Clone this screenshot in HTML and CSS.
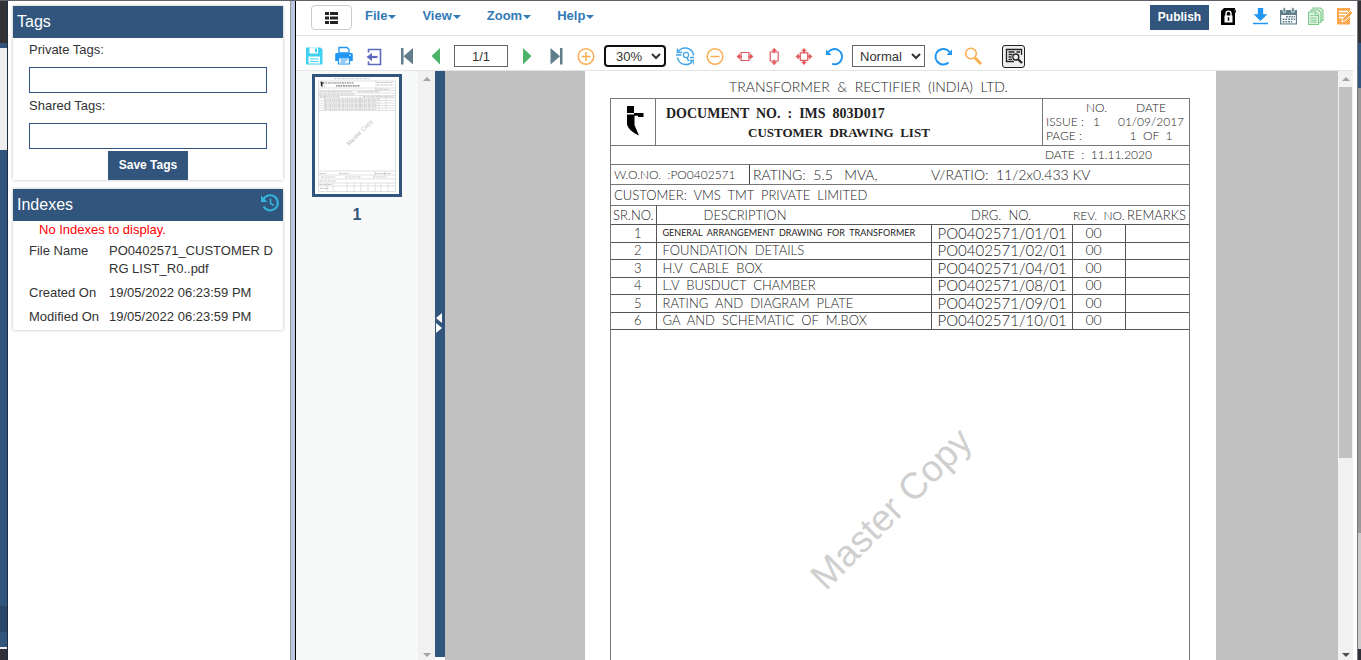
FILE: index.html
```html
<!DOCTYPE html>
<html lang="en">
<head>
<meta charset="utf-8">
<title>Document Viewer</title>
<link rel="stylesheet" href="styles.css">
</head>
<body>
<div class="backdrop backdrop-left"></div>

<aside class="sidebar">
  <section class="panel">
    <h2 class="panel-title">Tags</h2>
    <form class="tags-form">
      <label for="private-tags">Private Tags:</label>
      <input id="private-tags" class="tag-input" type="text">
      <label for="shared-tags">Shared Tags:</label>
      <input id="shared-tags" class="tag-input" type="text">
      <button class="btn-primary save" type="button">Save Tags</button>
    </form>
  </section>
  <section class="panel">
    <h2 class="panel-title">Indexes
      <button class="icon-btn history" type="button" aria-label="History"><svg viewBox="0 0 20 20" width="20" height="20" fill="none" stroke="#33b5dc" stroke-width="2"><path d="M3.5 6.2A7.6 7.6 0 1 1 3.6 13.6"/><path d="M1 2.5V9h6.5z" fill="#33b5dc" stroke="none"/><path d="M10.5 5.5v4.8l3.2 2.2" stroke-width="1.6"/></svg></button>
    </h2>
    <p class="empty">No Indexes to display.</p>
    <dl class="meta">
      <dt>File Name</dt><dd>PO0402571_CUSTOMER DRG LIST_R0..pdf</dd>
      <dt>Created On</dt><dd>19/05/2022 06:23:59 PM</dd>
      <dt>Modified On</dt><dd>19/05/2022 06:23:59 PM</dd>
    </dl>
  </section>
</aside>

<div class="divider"></div>

<main class="viewer">
  <header class="menubar">
    <button class="list-btn" type="button" aria-label="Toggle list"><svg viewBox="0 0 14 12" width="14" height="12" fill="#222"><path d="M0 0h4v3H0zM5 0h8v3H5zM0 4.5h4v3H0zM5 4.5h8v3H5zM0 9h4v3H0zM5 9h8v3H5z"/></svg></button>
    <nav class="menu">
      <a href="#file">File<i class="caret"></i></a>
      <a href="#view">View<i class="caret"></i></a>
      <a href="#zoom">Zoom<i class="caret"></i></a>
      <a href="#help">Help<i class="caret"></i></a>
    </nav>
    <button class="btn-primary publish" type="button">Publish</button>
    <div class="actions">
      <button class="icon-btn lock" type="button" aria-label="Lock"><svg viewBox="0 0 20 20" width="20" height="20"><path d="M2 4l3-3h11v17H2z" fill="#000"/><path d="M15 2l2 1v3l-2-1z" fill="#333"/><path d="M5.500 8.500h8v7h-8z" fill="#fff"/><path d="M7 9V6.600a2.500 2.500 0 0 1 5 0V9" fill="none" stroke="#fff" stroke-width="1.400"/><path d="M9.500 10.200v3.500" stroke="#000" stroke-width="1.500"/></svg></button>
      <button class="icon-btn" type="button" aria-label="Download"><svg viewBox="0 0 20 20" width="20" height="20" fill="#2196f3"><path d="M6.8 1h5.4v6.2h4.2L9.5 14 2.6 7.2h4.2zM2 15.700h15v1.600H2z"/></svg></button>
      <button class="icon-btn" type="button" aria-label="Calendar"><svg viewBox="0 0 20 20" width="20" height="20"><path d="M1 3h17v14.500H1z" fill="#607d8b"/><path d="M2.200 8h14.600v8.400H2.200z" fill="#fff"/><path d="M4 .8h2.600v4.400H4zM12.600.8h2.600v4.400h-2.600z" fill="#607d8b" stroke="#fff" stroke-width=".7"/><path d="M7 9.700h9M3.700 12.200h12.300M3.700 14.700h9.500" stroke="#607d8b" stroke-width="1.600" stroke-dasharray="1.800 .9"/></svg></button>
      <button class="icon-btn" type="button" aria-label="Copies"><svg viewBox="0 0 20 20" width="20" height="20" fill="#e0f3e3" stroke="#7cc98a" stroke-width="1.100"><path d="M6 1h7.500L16 3.500v10H6z"/><path d="M4 3h7.500L14 5.500v10H4z"/><path d="M1.600 5h7l2.900 3v9.500H1.600z"/><path d="M8 5v3.500h3.500M3.500 8.500h3M3.500 11h6M3.500 13.200h6M3.500 15.300h6"/></svg></button>
      <button class="icon-btn" type="button" aria-label="Edit"><svg viewBox="0 0 20 20" width="20" height="20"><path d="M2 1h13v16.500H2z" fill="#fba94c"/><path d="M4 4.500h9M4 7.500h7M4 10.500h4" stroke="#fff" stroke-width="1.300"/><path d="M7.500 11.500L15.500 3.500l2.500 2.500-8 8-3.300.8z" fill="#fba94c" stroke="#fff"/></svg></button>
    </div>
  </header>

  <div class="toolbar">
    <div class="tools files">
      <button class="icon-btn" type="button" aria-label="Save"><svg viewBox="0 0 20 20" width="20" height="20"><path d="M2 1.500h14.500l2 2V18.500H2z" fill="#3fd0f2"/><path d="M5.500 1.500h8.500v6H5.500zM4.500 10.500h11.500v7H4.500z" fill="#fff"/><path d="M11 2.500h2v3.800h-2zM6 12.500h8.500v1H6zM6 15h8.500v1H6z" fill="#3fd0f2"/></svg></button>
      <button class="icon-btn" type="button" aria-label="Print"><svg viewBox="0 0 20 20" width="20" height="20"><path d="M5 1.500h8l2 2V7H5z" fill="#fff" stroke="#2196f3" stroke-width="1.300"/><path d="M2.500 7h15a1.300 1.300 0 0 1 1.300 1.300V15H1.200V8.300A1.300 1.300 0 0 1 2.500 7z" fill="#2196f3"/><path d="M4.500 11.800h11V18h-11z" fill="#fff" stroke="#2196f3" stroke-width="1.200"/><path d="M6.500 14h7M6.500 16h5" stroke="#2196f3"/><circle cx="16" cy="9.200" r=".8" fill="#fff"/></svg></button>
      <button class="icon-btn" type="button" aria-label="Exit"><svg viewBox="0 0 20 20" width="20" height="20" fill="none" stroke="#5c6bc0" stroke-width="1.600"><path d="M4.500 6.500V3.500h12v15h-12V15.500"/><path d="M13.500 11H7" stroke-width="2.200"/><path d="M2.500 11l5.500-4v8z" fill="#5c6bc0" stroke="none"/></svg></button>
    </div>
    <div class="tools">
      <button class="icon-btn" type="button" aria-label="First page"><svg viewBox="0 0 20 20" width="20" height="20" fill="#607d8b"><path d="M5 2h2.500v16.500H5zM17 2v16.500L7.500 10.200z"/></svg></button>
      <button class="icon-btn" type="button" aria-label="Previous page"><svg viewBox="0 0 20 20" width="20" height="20"><path d="M14 2v16.500L5.500 10z" fill="#4db36a"/></svg></button>
    </div>
    <input class="page-box" type="text" value="1/1" aria-label="Page">
    <div class="tools">
      <button class="icon-btn" type="button" aria-label="Next page"><svg viewBox="0 0 20 20" width="20" height="20"><path d="M7 2v16.500L15.500 10z" fill="#4db36a"/></svg></button>
      <button class="icon-btn" type="button" aria-label="Last page"><svg viewBox="0 0 20 20" width="20" height="20" fill="#607d8b"><path d="M14 2h2.500v16.500H14zM4.500 2v16.500l9.500-8.300z"/></svg></button>
      <button class="icon-btn" type="button" aria-label="Zoom in"><svg viewBox="0 0 20 20" width="20" height="20" fill="none" stroke="#fbac50" stroke-width="1.500"><circle cx="10" cy="10.500" r="7.800"/><path d="M10 6v9M5.500 10.500h9"/></svg></button>
    </div>
    <select class="zoom-select" aria-label="Zoom level"><option>30%</option></select>
    <div class="tools">
      <button class="icon-btn" type="button" aria-label="Reset zoom"><svg viewBox="0 0 20 20" width="20" height="20" fill="none" stroke="#42a5e8" stroke-width="1.500"><path d="M4.500 5.500A8.300 8.300 0 0 1 19.500 9.500M18.500 15A8.300 8.300 0 0 1 3.500 11.500"/><path d="M3.500 2.500v4h4.500M20 18.500v-4h-4.500M2 9h5.500M16 11.500h4"/><circle cx="12" cy="9" r="2.600" stroke-width="1.200"/><path d="M13 11.500l1.500 3.500"/></svg></button>
      <button class="icon-btn" type="button" aria-label="Zoom out"><svg viewBox="0 0 20 20" width="20" height="20" fill="none" stroke="#fbac50" stroke-width="1.500"><circle cx="11" cy="10.500" r="7.800"/><path d="M6.500 10.500h9"/></svg></button>
      <button class="icon-btn" type="button" aria-label="Fit width"><svg viewBox="0 0 20 20" width="20" height="20" fill="#e05c62"><path d="M7 6.500h8v8H7z" fill="#fff" stroke="#e05c62" stroke-width="1.200"/><path d="M2.500 10.500l3.500-3v2.200h2v1.600H6v2.200zM19.500 10.500l-3.500-3v2.200h-2v1.600h2v2.200z"/></svg></button>
      <button class="icon-btn" type="button" aria-label="Fit height"><svg viewBox="0 0 20 20" width="20" height="20" fill="#e05c62"><path d="M6.200 6h8v9h-8z" fill="#fff" stroke="#e05c62" stroke-width="1.200"/><path d="M10.200 1.800l3 3.400H11v2H9.400v-2H7.200zM10.200 19.200l3-3.400H11v-2H9.400v2H7.200z"/></svg></button>
      <button class="icon-btn" type="button" aria-label="Fit page"><svg viewBox="0 0 20 20" width="20" height="20" fill="#e05c62"><path d="M6.300 6.800h7.500v7.500H6.300z" fill="#fff" stroke="#e05c62" stroke-width="1.200"/><path d="M10 2l3 3.200h-2v1.800H9V5.200H7zM10 19l3-3.200h-2V14H9v1.800H7zM1.500 10.500l3.500-3v2h2v2H5v2zM18.500 10.500l-3.500-3v2h-2v2h2v2z"/></svg></button>
      <button class="icon-btn" type="button" aria-label="Rotate left"><svg viewBox="0 0 20 20" width="20" height="20" fill="none" stroke="#2196f3" stroke-width="2"><path d="M4.500 6A7.600 7.600 0 1 1 8 17.900"/><path d="M2 3.500v5.500h5.500z" fill="#2196f3" stroke="none"/></svg></button>
    </div>
    <select class="mode-select" aria-label="View mode"><option>Normal</option></select>
    <div class="tools">
      <button class="icon-btn" type="button" aria-label="Rotate right"><svg viewBox="0 0 20 20" width="20" height="20" fill="none" stroke="#2196f3" stroke-width="2"><path d="M16.500 6A7.800 7.800 0 1 0 15.500 16.500"/><path d="M19 3.500v5.500h-5.500z" fill="#2196f3" stroke="none"/></svg></button>
      <button class="icon-btn" type="button" aria-label="Search"><svg viewBox="0 0 20 20" width="20" height="20" fill="none" stroke="#fbac50"><circle cx="8" cy="7.500" r="5.300" stroke-width="1.500"/><path d="M12 12l6 6" stroke-width="3"/></svg></button>
    </div>
    <button class="find-btn" type="button" aria-label="Find in page"><svg viewBox="0 0 18 18" width="18" height="18" fill="none" stroke="#222" stroke-width="1.300"><path d="M9 14.500H1.500v-12h15V8"/><path d="M3.500 5h6M11.500 5h3.500M3.500 7.500h4M3.500 10h3M3.500 12.300h3.500" /><circle cx="10.800" cy="10" r="3"/><path d="M13 12.300l4 3.700" stroke-width="2.200"/></svg></button>
  </div>

  <div class="workspace">
    <div class="thumbs">
      <button class="thumb" type="button" aria-label="Page 1">
        <svg viewBox="0 0 84 117" width="84" height="117">
          <path fill="#fff" d="M0 0h84v117H0z"/>
          <g stroke="#ccc" stroke-width=".6" fill="none">
            <path d="M3.500 4h77v110.500H3.500zM9.500 4v7M3.500 11h77M3.500 13.500h77M3.500 16h77M3.500 18.500h77M3.500 21h77M3.500 23.500h77M3.500 26h77M3.500 28.500h77M3.500 31h77M3.500 33.500h77M9.500 18.500v15M45 18.500v15M64 18.500v15M71 18.500v15M61 4v7"/>
            <path d="M3.500 94h77M3.500 98h77M3.500 102h77M3.500 106h77M3.500 109h77M12 106v8M18 106v8M32 106v8M39 106v8M46 106v8M53 106v8M60 106v8M66 106v8M73 106v8M60 94v5M70 94v5"/>
          </g>
          <g stroke="#999" stroke-width="1.100" fill="none" stroke-dasharray="2 .6 1 .7" opacity=".6">
            <path d="M19 1.800h36M62 5.500h16M62 8h17M60 12.200h14M4.500 14.800h33M43 14.800h22M4.500 17.300h35M5 19.800h20M48 19.800h31M10 22.300h54M10 24.800h52M10 27.300h52M10 29.800h52M10 32.300h52M4.500 96.500h6M24 96.500h10M60 96.500h16M6 100h14M30 100h16M58 100h14M4.500 104h17M4.500 107.500h12M5 111.500h9"/>
          </g>
          <path d="M10.500 6h28M21 8.800h24" stroke="#777" stroke-width="1.200" stroke-dasharray="1.500 .7 2 .6"/>
          <path d="M5.500 4.800h2v.8h1.500v1H7.500V10l-1.500-1z" fill="#222"/>
          <text class="thumb-mark" transform="translate(34 69) rotate(-45)">Master Copy</text>
        </svg>
      </button>
      <span class="thumb-number">1</span>
    </div>
    <div class="scroll thumb-scroll"><i class="up"></i><i class="down"></i></div>
    <div class="splitter"><i class="go-left"></i><i class="go-right"></i></div>

    <div class="canvas">
      <article class="sheet">
        <h1 class="company">TRANSFORMER  &amp;  RECTIFIER  (INDIA)  LTD.</h1>
        <div class="drawing">
          <div class="doc-head">
            <div class="doc-logo"><svg viewBox="0 0 20 32" width="20" height="32"><path d="M2 1h7v7H2zM2 9.500h7V8h9.500v4H13v-1.200H9.500V20L14 30.500C7 27.500 2.500 23 2 19z"/></svg></div>
            <div class="doc-title"><span>DOCUMENT  NO.  :  IMS  803D017</span><span class="second">CUSTOMER  DRAWING  LIST</span></div>
            <div class="doc-issue">
              <span></span><span class="mid">NO.</span><span class="end">DATE</span>
              <span>ISSUE :</span><span>1</span><span class="end">01/09/2017</span>
              <span>PAGE :</span><span></span><span class="end">1  OF  1</span>
            </div>
          </div>
          <div class="doc-date">DATE  :  11.11.2020</div>
          <div class="doc-order"><span class="wo">W.O.NO.  :PO0402571</span><span class="rating">RATING:  5.5   MVA,</span><span>V/RATIO:  11/2x0.433 KV</span></div>
          <div class="doc-customer">CUSTOMER:  VMS  TMT  PRIVATE  LIMITED</div>
          <table class="drawings">
            <colgroup><col class="c-sr"><col class="c-desc"><col class="c-drg"><col class="c-rev"><col class="c-rem"></colgroup>
            <thead><tr><th>SR.NO.</th><th class="h-desc">DESCRIPTION</th><th class="h-drg">DRG.  NO.</th><th class="h-rev">REV.  NO.</th><th>REMARKS</th></tr></thead>
            <tbody>
              <tr><td>1</td><td class="tight">GENERAL  ARRANGEMENT  DRAWING  FOR  TRANSFORMER</td><td>PO0402571/01/01</td><td>00</td><td></td></tr>
              <tr><td>2</td><td>FOUNDATION  DETAILS</td><td>PO0402571/02/01</td><td>00</td><td></td></tr>
              <tr><td>3</td><td>H.V  CABLE  BOX</td><td>PO0402571/04/01</td><td>00</td><td></td></tr>
              <tr><td>4</td><td>L.V  BUSDUCT  CHAMBER</td><td>PO0402571/08/01</td><td>00</td><td></td></tr>
              <tr><td>5</td><td>RATING  AND  DIAGRAM  PLATE</td><td>PO0402571/09/01</td><td>00</td><td></td></tr>
              <tr><td>6</td><td>GA  AND  SCHEMATIC  OF  M.BOX</td><td>PO0402571/10/01</td><td>00</td><td></td></tr>
            </tbody>
          </table>
        </div>
        <div class="watermark">Master Copy</div>
      </article>
    </div>
    <div class="scroll page-scroll"><i class="up"></i><div class="handle"></div><i class="down dark"></i></div>
  </div>
</main>

<div class="backdrop backdrop-right"></div>
</body>
</html>
```

FILE: styles.css
```css
* { box-sizing: border-box; }
body {
  margin: 0;
  height: 100vh;
  overflow: hidden;
  display: flex;
  border-top: 1px solid #606066;
  background: #fff;
  color: #333;
  font: 13px/18px "Liberation Sans", Arial, sans-serif;
}
button, input, select { font: inherit; color: inherit; }
button { cursor: pointer; }
h1, h2, p, dl, dd { margin: 0; font-weight: normal; }

/* page behind the dialog */
.backdrop { flex: none; }
.backdrop-left {
  width: 8px;
  border-right: 1px solid #1f2d3f;
  background: linear-gradient(#333337 42px, #31557d 42px 47px, #eee 47px 149px, #31557d 149px 605px, #2a4669 605px 631px, #31557d 631px 646px, #eee 646px 648px, #303038 648px);
}
.backdrop-right {
  width: 4px;
  border-left: 1px solid #77777c;
  background: linear-gradient(#333337 42px, #31557d 42px 87px, #999 87px 532px, #ccc 532px 648px, #303038 648px);
}

/* sidebar */
.sidebar {
  flex: none;
  width: 282px;
  padding: 5px 7px 0 5px;
  display: flex;
  flex-direction: column;
  gap: 9px;
}
.panel { box-shadow: 0 0 3px rgba(0, 0, 0, .28); }
.panel-title {
  display: flex;
  justify-content: space-between;
  height: 32px;
  padding: 0 3px 0 4px;
  background: #31557d;
  color: #fff;
  font-size: 16px;
  line-height: 32px;
}
.tags-form {
  display: flex;
  flex-direction: column;
  padding: 2px 16px 0;
}
.tags-form label { line-height: 20px; }
.tag-input {
  height: 26px;
  margin: 7px 0 3px;
  padding: 2px 6px;
  border: 1px solid #31557d;
}
.tags-form .save { margin-top: -1px; }
.btn-primary {
  border: 0;
  background: #31557d;
  color: #fff;
  font-weight: bold;
  font-size: 12px;
}
.save {
  align-self: center;
  width: 80px;
  height: 29px;
  padding: 0 0 2px;
}
.icon-btn {
  flex: none;
  width: 20px;
  height: 20px;
  padding: 0;
  border: 0;
  background: none;
}
.icon-btn svg, .find-btn svg, .list-btn svg, .thumb svg { display: block; }
.history { margin-top: 4px; }
.empty { padding-left: 26px; color: #f00; }
.meta {
  display: grid;
  grid-template-columns: 80px 1fr;
  row-gap: 6px;
  padding: 3px 8px 4px 16px;
}
.meta dt { white-space: nowrap; }
.meta dd { word-break: break-all; }

.divider {
  flex: none;
  width: 6px;
  border-left: 1px solid #999;
  border-right: 1px solid #000;
  background: #b9c7df;
}

/* viewer */
.viewer {
  flex: 1;
  min-width: 0;
  display: flex;
  flex-direction: column;
  padding-right: 4px;
}
.menubar {
  flex: none;
  display: flex;
  align-items: flex-start;
  height: 35px;
  margin-right: -2px;
  padding: 4px 0 0 15px;
  border-bottom: 1px solid #e4e4e4;
}
.list-btn {
  display: grid;
  place-items: center;
  width: 41px;
  height: 25px;
  padding: 0;
  border: 1px solid #ccc;
  border-radius: 4px;
  background: #fff;
}
.menu {
  flex: 1;
  display: flex;
  gap: 26px;
  padding: 2px 0 0 13px;
  font-weight: bold;
}
.menu a { color: #337ab7; text-decoration: none; }
.caret {
  display: inline-block;
  margin-left: 1px;
  border: 4px solid transparent;
  border-top-color: #337ab7;
  border-bottom: 0;
  vertical-align: middle;
}
.publish { width: 59px; height: 25px; padding: 0 0 2px; }
.actions { display: flex; gap: 8px; padding: 2px 0 0 10px; }
.actions .lock { margin-right: 4px; }

.toolbar {
  flex: none;
  display: flex;
  align-items: center;
  gap: 8px;
  height: 35px;
  padding: 6px 8px 0;
  border-bottom: 1px solid #e4e4e4;
}
.tools { display: flex; gap: 10px; }
.files { margin-right: 4px; }
.page-box {
  width: 54px;
  height: 22px;
  padding: 0;
  border: 1px solid #666;
  text-align: center;
}
.zoom-select, .mode-select {
  height: 22px;
  padding: 0 0 0 3px;
  border: 1px solid #666;
  border-radius: 0;
  background: #fff;
}
.zoom-select { width: 62px; padding-left: 6px; border: 2px solid #101010; border-radius: 4px; }
.mode-select { width: 73px; }
.find-btn {
  display: grid;
  place-items: center;
  width: 23px;
  height: 23px;
  margin-left: 11px;
  padding: 0;
  border: 1px solid #222;
  border-radius: 3px;
  background: #eee;
}

.workspace { flex: 1; min-height: 0; display: flex; }
.thumbs {
  flex: none;
  width: 122px;
  padding: 3px 0 0;
  display: flex;
  flex-direction: column;
  align-items: center;
  gap: 9px;
  background: #f8faf9;
}
.thumb { padding: 0; border: 3px solid #31557d; background: #fff; }
.thumb-mark { font-size: 6px; fill: #bbb; }
.thumb-number { color: #31557d; font-size: 16px; font-weight: bold; }

.scroll {
  flex: none;
  display: flex;
  flex-direction: column;
  align-items: center;
  padding: 6px 0 3px;
  background: #f1f1f1;
}
.thumb-scroll { width: 17px; }
.page-scroll { width: 15px; }
.up, .down { border: 4px solid transparent; }
.up { border-bottom-color: #a3a3a3; border-top: 0; }
.down { margin-top: auto; border-top-color: #a3a3a3; border-bottom: 0; }
.dark { border-top-color: #505050; }
.handle { width: 13px; height: 64%; margin-top: 6px; background: #c1c1c1; }

.splitter {
  flex: none;
  width: 10px;
  margin-bottom: 3px;
  display: flex;
  flex-direction: column;
  align-items: center;
  justify-content: center;
  padding-right: 2px;
  padding-bottom: 82px;
  background: #31557d;
}
.go-left, .go-right { border: 5px solid transparent; }
.go-left { border-right: 6px solid #fff; border-left: 0; }
.go-right { border-left: 6px solid #fff; border-right: 0; }

/* page canvas */
.canvas {
  flex: 1;
  min-width: 0;
  overflow: hidden;
  display: flex;
  justify-content: center;
  padding-left: 18px;
  background: #c1c1c1;
}
.sheet {
  position: relative;
  width: 631px;
  padding: 7px 26px 0 25px;
  display: flex;
  flex-direction: column;
  background: #fff;
  color: #222;
  font: 300 14px/17px Lato, "Open Sans", sans-serif;
}
.sheet h1, .sheet span, .sheet th, .sheet td, .doc-date, .doc-customer { white-space: pre; }
.company { padding-right: 63px; font-size: 14px; font-weight: 300; text-align: center; }
.drawing {
  flex: 1;
  margin-top: 3px;
  border: 1px solid #777;
  border-bottom: 0;
}
.doc-head {
  display: grid;
  grid-template-columns: 45px 1fr 147px;
  grid-template-rows: 100%;
  height: 47px;
  border-bottom: 1px solid #777;
}
.doc-logo { display: grid; place-items: center; padding: 0 0 2px 4px; border-right: 1px solid #777; }
.doc-title {
  display: flex;
  flex-direction: column;
  gap: 2px;
  padding: 6px 10px 0;
  font: bold 13px/17px "Liberation Serif", serif;
}
.doc-title span:first-child { font-size: 14px; }
.second { padding-left: 82px; }
.doc-issue {
  display: grid;
  grid-template-columns: 47px 20px 1fr;
  grid-auto-rows: 14px;
  padding: 2px 0 0 3px;
  border-left: 1px solid #777;
  font-size: 12px;
  line-height: 14px;
}
.mid { margin-left: -7px; }
.end { text-align: center; }
.doc-date {
  height: 19px;
  padding-right: 37px;
  border-bottom: 1px solid #777;
  font-size: 12px;
  line-height: 18px;
  text-align: right;
}
.doc-order {
  display: grid;
  grid-template-columns: 139px 181px 1fr;
  height: 20px;
  border-bottom: 1px solid #777;
  line-height: 19px;
}
.wo { padding-left: 3px; border-right: 1px solid #444; font-size: 12px; }
.rating { padding-left: 3px; }
.doc-customer { height: 20px; padding-left: 3px; font-size: 13px; line-height: 20px; }
.drawings {
  width: 100%;
  table-layout: fixed;
  border-collapse: collapse;
  border-top: 1px solid #777;
}
.c-sr { width: 45px; }
.c-desc { width: 275px; }
.c-drg { width: 141px; }
.c-rev { width: 53px; }
.drawings th { height: 19px; padding: 0 0 0 2px; font-size: 13px; font-weight: 300; line-height: 17px; text-align: left; }
.drawings th:first-child { border-right: 1px solid #555; }
.drawings .h-desc { padding-left: 47px; }
.drawings .h-drg { padding-left: 40px; }
.drawings .h-rev { padding-left: 1px; font-size: 12px; }
.drawings td {
  height: 18px;
  padding: 0 6px 2px;
  border: 1px solid #555;
  font-size: 13px;
  line-height: 14px;
}
.drawings tr:nth-child(even) td { height: 17px; }
.drawings td:first-child { border-left: 0; padding-left: 23px; }
.drawings td:last-child { border-right: 0; }
.drawings td:nth-child(3) { font-size: 15px; }
.drawings td:nth-child(4) { padding-left: 13px; font-size: 14px; }
.drawings .tight { font-size: 9px; font-weight: 400; }

.watermark {
  position: absolute;
  left: 0;
  right: 18px;
  top: 416px;
  color: #cfcfcf;
  font: 37px/44px "Liberation Sans", Arial, sans-serif;
  text-align: center;
  transform: rotate(-45deg);
}
```
